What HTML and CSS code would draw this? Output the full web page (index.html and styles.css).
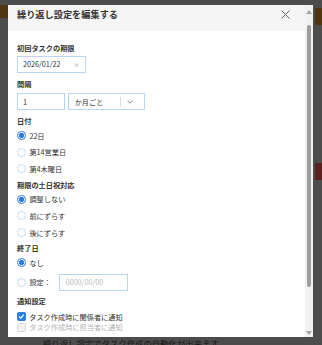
FILE: index.html
```html
<!DOCTYPE html>
<html lang="ja">
<head>
<meta charset="UTF-8">
<meta name="viewport" content="width=device-width, initial-scale=1.0">
<title>繰り返し設定</title>
<link rel="stylesheet" href="styles.css">
</head>
<body>

<div class="modal">
    <div class="modalContent">
        <div class="modalHeader">
            <span class="modalTitle">繰り返し設定を編集する</span>
            <svg class="closeIcon" width="9" height="9" viewBox="0 0 9 9"><path d="M0.5 0.5L8.5 8.5M8.5 0.5L0.5 8.5"/></svg>
        </div>

        <div class="modalBody">
            <div class="fieldLabel firstLabel">初回タスクの期限</div>
            <div class="textBox dateBox">
                <span>2026/01/22</span>
                <span class="clearMark">×</span>
            </div>

            <div class="fieldLabel afterInput">間隔</div>
            <div class="intervalRow">
                <div class="textBox numberBox">1</div>
                <div class="textBox selectBox">
                    <span class="selectText">か月ごと</span>
                    <span class="selectDivider"></span>
                    <svg class="chevron" width="6" height="4" viewBox="0 0 6 4"><path d="M0.5 0.7L3 3.2L5.5 0.7"/></svg>
                </div>
            </div>

            <div class="fieldLabel afterInput">日付</div>
            <div class="radioRow"><span class="radioMark checked"></span>22日</div>
            <div class="radioRow"><span class="radioMark"></span>第14営業日</div>
            <div class="radioRow"><span class="radioMark"></span>第4木曜日</div>

            <div class="fieldLabel">期限の土日祝対応</div>
            <div class="radioRow"><span class="radioMark checked"></span>調整しない</div>
            <div class="radioRow"><span class="radioMark"></span>前にずらす</div>
            <div class="radioRow"><span class="radioMark"></span>後にずらす</div>

            <div class="fieldLabel">終了日</div>
            <div class="radioRow"><span class="radioMark checked"></span>なし</div>
            <div class="radioRow settingRow">
                <span class="radioMark"></span>設定：
                <div class="textBox endDateBox">0000/00/00</div>
            </div>

            <div class="fieldLabel">通知設定</div>
            <div class="checkGroup">
                <div class="checkRow">
                    <span class="checkMark checked"><svg width="7" height="7" viewBox="0 0 7 7"><path d="M1 3.6L2.8 5.3L6 1.6"/></svg></span>
                    タスク作成時に関係者に通知
                </div>
                <div class="checkRow disabled">
                    <span class="checkMark"></span>
                    タスク作成時に担当者に通知
                </div>
            </div>
        </div>
    </div>

    <div class="scrollBar">
        <div class="scrollButton">
            <svg width="6" height="4" viewBox="0 0 6 4"><path d="M0 4L3 0L6 4Z"/></svg>
        </div>
        <div class="scrollThumb"></div>
        <div class="scrollTrack"></div>
        <div class="scrollButton bottom">
            <svg width="6" height="4" viewBox="0 0 6 4"><path d="M0 0L6 0L3 4Z"/></svg>
        </div>
    </div>
</div>

<div class="backdropNote">繰り返し設定でタスク作成の自動化が出来ます。</div>

</body>
</html>
```

FILE: styles.css
```css
* {
    box-sizing: border-box;
}

html,
body {
    margin: 0;
}

body {
    height: 345px;
    overflow: hidden;
    padding: 5px 9px 0 8px;
    font-family: "Noto Sans CJK JP", "Noto Sans", sans-serif;
    color: #333;
    background-color: #4c4c4c;
    background-image:
        linear-gradient(#4f3512, #4f3512),
        linear-gradient(#4f3512, #4f3512),
        linear-gradient(#5b2121, #5b2121);
    background-size: 8px 13px, 7px 17px, 7px 17px;
    background-position: 0 5px, 315px 8px, 315px 163px;
    background-repeat: no-repeat;
}

.modal {
    display: flex;
    width: 305px;
    height: 332px;
    overflow: hidden;
    background-color: #fff;
}

.modalContent {
    flex: 1;
    min-width: 0;
    overflow: hidden;
}

/* scrollbar of the dialog */
.scrollBar {
    display: flex;
    flex-direction: column;
    width: 8px;
    background-color: #f1f1f1;
}

.scrollButton {
    display: flex;
    justify-content: center;
    height: 20px;
    padding-top: 5px;
}

.scrollButton.bottom {
    padding-top: 14px;
}

.scrollButton path {
    fill: #a3a3a3;
}

.scrollThumb {
    height: 262px;
    margin: 0 2px;
    border-radius: 2px;
    background-color: #9d9d9d;
}

.scrollTrack {
    flex: 1;
}

.modalHeader {
    height: 26px;
    padding: 3px 15px 0 9px;
    display: flex;
    align-items: flex-start;
    justify-content: space-between;
    background-color: #f5f5f5;
}

.modalTitle {
    font-size: 9.2px;
    font-weight: bold;
    line-height: 13px;
    color: #333;
}

.closeIcon {
    margin-top: 2px;
}

.closeIcon path {
    stroke: #666;
    stroke-width: 1;
    fill: none;
}

.modalBody {
    padding: 10.7px 9px 0 9px;
}

.fieldLabel {
    height: 12px;
    margin-top: 1.6px;
    font-size: 7.2px;
    font-weight: bold;
    line-height: 12px;
}

.fieldLabel.firstLabel {
    margin-top: 0;
}

.fieldLabel.afterInput {
    margin-top: 4.8px;
}

.textBox {
    display: flex;
    align-items: center;
    height: 17.6px;
    padding: 0 5px;
    border: 1px solid #b7d5f5;
    font-size: 7.2px;
    color: #333;
    background-color: #fff;
}

.dateBox {
    width: 69.4px;
    margin-top: 2px;
    justify-content: space-between;
    padding-right: 6px;
}

.clearMark {
    font-size: 6px;
    color: #999;
}

.intervalRow {
    display: flex;
    gap: 2.6px;
    margin-top: 2.7px;
}

.numberBox {
    width: 48.4px;
}

.selectBox {
    width: 77.4px;
    padding-left: 5.7px;
}

.selectText {
    flex: 1;
}

.selectDivider {
    width: 1px;
    height: 10px;
    background-color: #ddd;
}

.chevron {
    margin: 0 6px 0 6px;
}

.chevron path {
    stroke: #777;
    stroke-width: 0.9;
    fill: none;
}

.radioRow {
    display: flex;
    align-items: center;
    height: 16.7px;
    font-size: 7.2px;
}

.radioMark {
    width: 8.8px;
    height: 8.8px;
    margin-right: 3.6px;
    border: 1px solid #c5dcf5;
    border-radius: 50%;
    background-color: #fff;
}

.radioMark.checked {
    border-color: #2b7de0;
    background: radial-gradient(circle, #2b7de0 0 2.4px, #fff 2.9px);
}

.settingRow {
    height: 22px;
}

.endDateBox {
    width: 69px;
    height: 16.7px;
    margin-left: 7.7px;
    padding-left: 6px;
    color: #bbb;
}

.checkGroup {
    margin-top: 4.6px;
}

.checkRow {
    display: flex;
    align-items: center;
    height: 10.7px;
    font-size: 7.2px;
}

.checkMark {
    display: flex;
    align-items: center;
    justify-content: center;
    width: 8.8px;
    height: 8.8px;
    margin-right: 3.4px;
    border: 1px solid #d8d8d8;
    border-radius: 1.5px;
    background-color: #f3f3f3;
}

.checkMark.checked {
    border-color: #2b7de0;
    background-color: #2b7de0;
}

.checkMark path {
    stroke: #fff;
    stroke-width: 1.2;
    fill: none;
}

.checkRow.disabled {
    color: #b3b3b3;
}

.backdropNote {
    margin: 1px 0 0 35px;
    font-size: 8.4px;
    line-height: 10px;
    color: #161616;
    white-space: nowrap;
}
```
